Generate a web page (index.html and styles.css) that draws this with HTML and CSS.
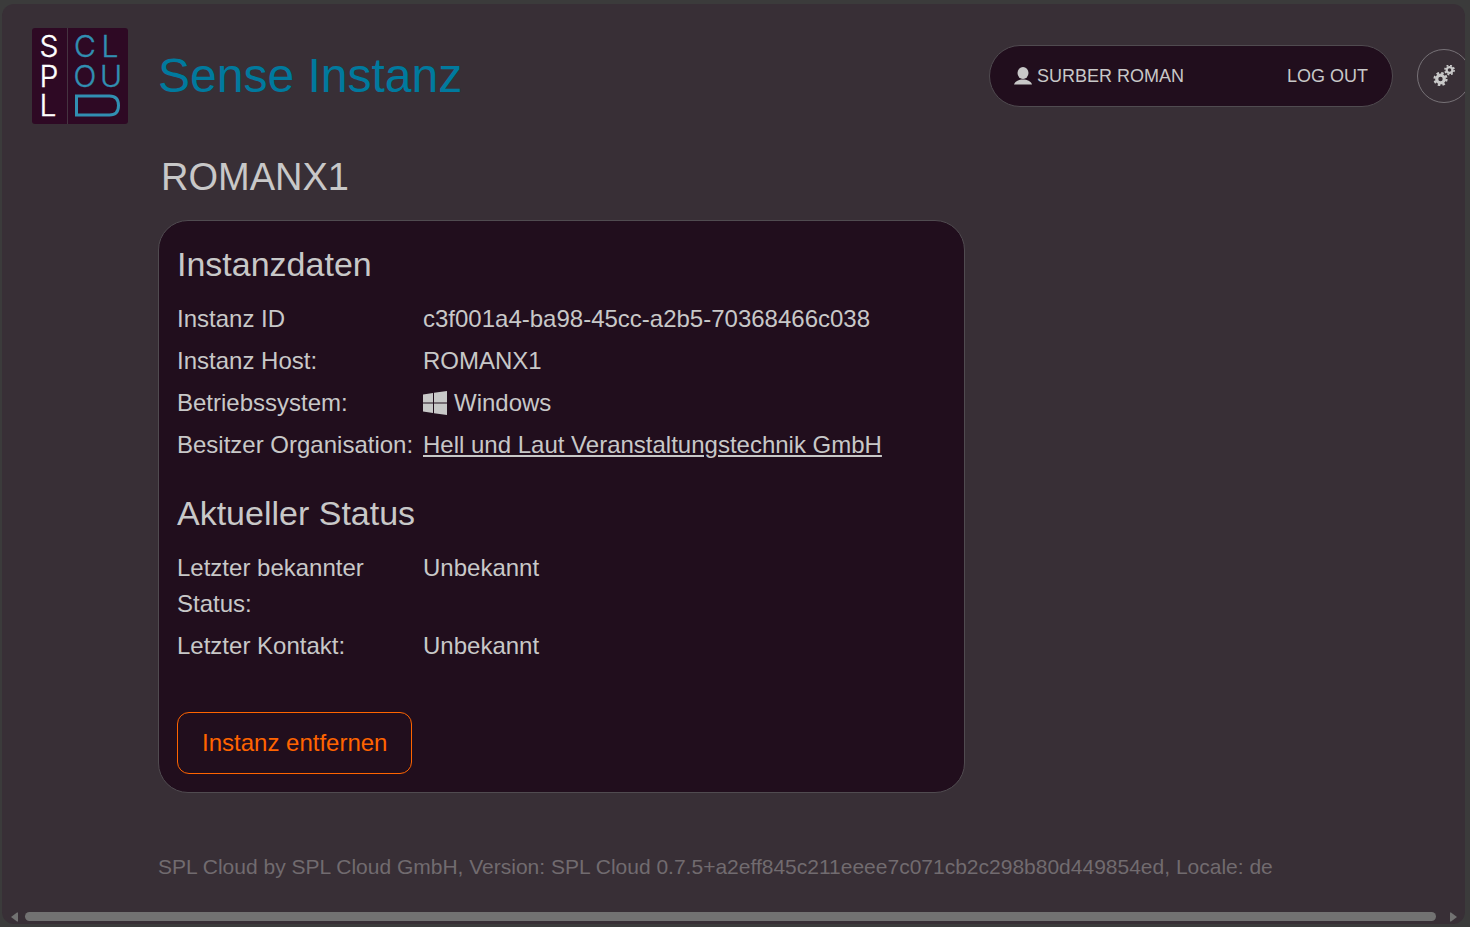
FILE: index.html
```html
<!DOCTYPE html>
<html lang="de">
<head>
<meta charset="utf-8">
<meta name="viewport" content="width=device-width, initial-scale=1">
<title>Sense Instanz</title>
<link rel="stylesheet" href="styles.css">
</head>
<body>
<div class="window">
  <header class="header">
    <a class="logo" href="#" aria-label="SPL Cloud">
      <svg viewBox="0 0 96 96" width="96" height="96" aria-hidden="true">
        <rect class="logo-bg" width="96" height="96" rx="3"/>
        <rect class="logo-line" x="35" width="1" height="96"/>
        <g class="logo-left">
          <text x="17" y="29">S</text>
          <text x="17" y="59">P</text>
          <text x="16" y="88">L</text>
        </g>
        <g class="logo-right">
          <text x="53" y="29">C</text>
          <text x="78" y="29">L</text>
          <text x="53" y="59">O</text>
          <text x="79" y="59">U</text>
        </g>
        <path class="logo-box" d="M44.500 68H77.500Q86.500 68 86.500 77.500T77.500 87H44.500Z"/>
      </svg>
    </a>
    <h1 class="title">Sense Instanz</h1>
    <nav class="user">
      <a class="user-name" href="#">
        <svg viewBox="0 0 18 18" width="18" height="18" aria-hidden="true"><ellipse cx="9" cy="6" rx="5.500" ry="6"/><path d="M0 17.500C1 14 5 12.500 9 12.500S17 14 18 17.500Z"/></svg>
        SURBER ROMAN</a>
      <a href="#">LOG OUT</a>
    </nav>
    <button class="settings" type="button" aria-label="Einstellungen">
      <svg viewBox="0 0 22 22" width="22" height="22" aria-hidden="true">
        <g class="gear">
          <circle cx="7.500" cy="14" r="3.800" stroke-width="3.200"/>
          <circle cx="7.500" cy="14" r="6" stroke-width="2.200" stroke-dasharray="2.500 2.212"/>
          <circle cx="16.500" cy="5" r="2.900" stroke-width="2.200"/>
          <circle cx="16.500" cy="5" r="4.600" stroke-width="1.600" stroke-dasharray="1.900 1.713"/>
        </g>
      </svg>
    </button>
  </header>
  <main class="main">
    <h2 class="name">ROMANX1</h2>
    <section class="card">
      <h3>Instanzdaten</h3>
      <dl class="data">
        <dt>Instanz ID</dt><dd>c3f001a4-ba98-45cc-a2b5-70368466c038</dd>
        <dt>Instanz Host:</dt><dd>ROMANX1</dd>
        <dt>Betriebssystem:</dt>
        <dd class="os"><svg viewBox="0 0 24 24" width="24" height="24" aria-hidden="true"><path d="M0 3.500 10 2V11.500H0ZM11 1.800 24 0V11.500H11ZM0 12.500H10V22L0 20.500ZM11 12.500H24V24L11 22.200Z"/></svg>Windows</dd>
        <dt>Besitzer Organisation:</dt><dd><a href="#">Hell und Laut Veranstaltungstechnik GmbH</a></dd>
      </dl>
      <h3>Aktueller Status</h3>
      <dl class="data">
        <dt>Letzter bekannter Status:</dt><dd>Unbekannt</dd>
        <dt>Letzter Kontakt:</dt><dd>Unbekannt</dd>
      </dl>
      <button class="remove" type="button">Instanz entfernen</button>
    </section>
  </main>
  <footer class="footer">SPL Cloud by SPL Cloud GmbH, Version: SPL Cloud 0.7.5+a2eff845c211eeee7c071cb2c298b80d449854ed, Locale: de</footer>
  <div class="scrollbar" aria-hidden="true">
    <svg viewBox="0 0 8 10" width="8" height="10"><path d="M8 .5V9.500H7L1 5 7 .5Z"/></svg>
    <span class="thumb"></span>
    <svg viewBox="0 0 8 10" width="8" height="10"><path d="M0 .5V9.500H1L7 5 1 .5Z"/></svg>
  </div>
</div>
</body>
</html>
```
FILE: styles.css
```css
* { box-sizing: border-box; }

body {
  margin: 0;
  padding: 4px 5px 3px 2px;
  min-height: 100vh;
  display: flex;
  background: #3b3b3b;
  color: #c8c8c8;
  font: 24px/36px "Liberation Sans", Arial, sans-serif;
}

h1, h2, h3, dl, dd { margin: 0; font-weight: 400; }
a { color: inherit; }
svg { fill: currentColor; flex: none; }

.window {
  flex: 1;
  min-width: 0;
  display: flex;
  flex-direction: column;
  overflow: hidden;
  border-radius: 12px;
  background: #382f36;
}

.header {
  display: flex;
  align-items: center;
  padding: 24px 0 0 30px;
}

.logo { display: flex; margin-right: 30px; }
.logo-bg { fill: #2e0924; }
.logo-line { fill: #453340; }
.logo text { font: 300 30px Inter, sans-serif; text-anchor: middle; }
.logo-left { fill: #fff; stroke: #fff; stroke-width: 0.4px; }
.logo-right { fill: #318fb2; stroke: #318fb2; stroke-width: 0.4px; }
.logo-box { fill: none; stroke: #318fb2; stroke-width: 3px; }

.title { flex: 1; color: #007a9e; font-size: 48px; line-height: 60px; }

.user {
  display: flex;
  align-items: center;
  justify-content: space-between;
  width: 404px;
  height: 62px;
  margin-right: 24px;
  padding: 0 24px;
  border: 1px solid #504b50;
  border-radius: 31px;
  background: #210e1d;
  font-size: 18px;
}
.user a { text-decoration: none; }
.user-name { display: flex; align-items: center; gap: 5px; }

.settings {
  display: grid;
  place-items: center;
  width: 54px;
  height: 54px;
  margin-right: -6px;
  padding: 0;
  border: 1px solid #777277;
  border-radius: 50%;
  background: none;
  color: #c8c8c8;
}
.gear { fill: none; stroke: currentColor; }

.main { padding: 30px 30px 0 156px; }
.name { padding-left: 3px; font-size: 38px; line-height: 46px; }

.card {
  max-width: 807px;
  margin-top: 20px;
  padding: 22px 18px 18px;
  border: 1px solid #504b50;
  border-radius: 30px;
  background: #210e1d;
}
.card h3 { margin-bottom: 16px; font-size: 34px; line-height: 42px; }
.data {
  display: grid;
  grid-template-columns: 240px 1fr;
  gap: 6px;
  margin-bottom: 29px;
}

.os { display: flex; align-items: center; gap: 7px; }

.remove {
  display: block;
  margin-top: 48px;
  padding: 12px 24px;
  border: 1px solid #ff6400;
  border-radius: 12px;
  background: none;
  color: #ff6400;
  font: inherit;
}

.footer {
  margin: auto 30px 26px 156px;
  color: #716b6f;
  font-size: 21px;
  line-height: 32px;
}

.scrollbar {
  display: flex;
  align-items: center;
  gap: 7px;
  height: 15px;
  padding: 0 7px 0 8px;
  color: #727272;
}
.thumb { flex: 1; height: 9px; margin-right: 7px; border-radius: 5px; background: #727272; }
```
